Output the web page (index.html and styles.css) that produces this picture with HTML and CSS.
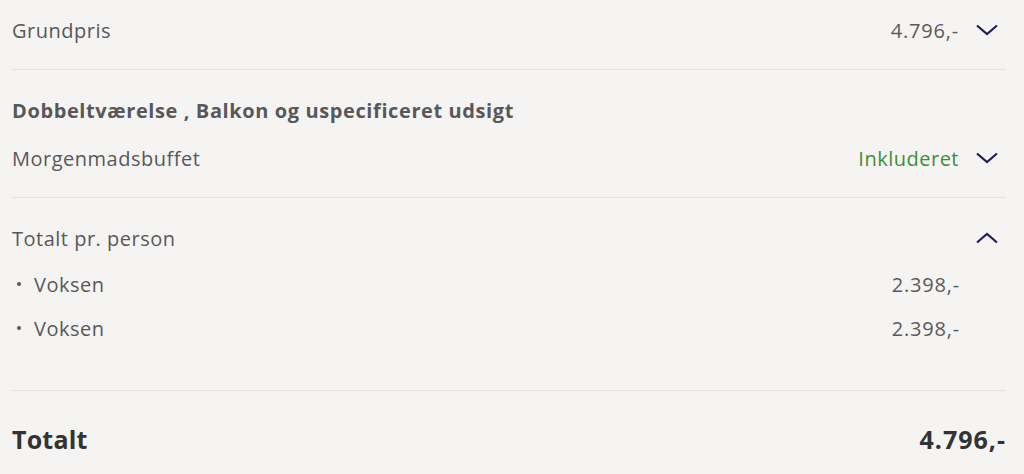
FILE: index.html
```html
<!DOCTYPE html>
<html lang="da">
<head>
<meta charset="utf-8">
<link rel="stylesheet" href="styles.css">
</head>
<body>
<div class="summary">
  <section class="section first">
    <div class="row">
      <span class="label">Grundpris</span>
      <span class="right"><span class="price">4.796,-</span><span class="chev"><svg viewBox="0 0 24 12" width="24" height="12"><path d="M2 1.5 L12 10 L22 1.5" fill="none" stroke="#211d5e" stroke-width="2.2"/></svg></span></span>
    </div>
  </section>
  <section class="section">
    <div class="row heading">Dobbeltværelse , Balkon og uspecificeret udsigt</div>
    <div class="row">
      <span class="label">Morgenmadsbuffet</span>
      <span class="right"><span class="price green">Inkluderet</span><span class="chev"><svg viewBox="0 0 24 12" width="24" height="12"><path d="M2 1.5 L12 10 L22 1.5" fill="none" stroke="#211d5e" stroke-width="2.2"/></svg></span></span>
    </div>
  </section>
  <section class="section persons">
    <div class="row">
      <span class="label">Totalt pr. person</span>
      <span class="right"><span class="chev"><svg viewBox="0 0 24 12" width="24" height="12"><path d="M2 10.5 L12 2 L22 10.5" fill="none" stroke="#211d5e" stroke-width="2.2"/></svg></span></span>
    </div>
    <ul class="items">
      <li class="item"><span class="label"><span class="dot"></span>Voksen</span><span class="price item-price">2.398,-</span></li>
      <li class="item"><span class="label"><span class="dot"></span>Voksen</span><span class="price item-price">2.398,-</span></li>
    </ul>
  </section>
  <div class="total">
    <span class="total-label">Totalt</span>
    <span class="total-price">4.796,-</span>
  </div>
</div>
</body>
</html>
```

FILE: styles.css
```css
html, body {
  margin: 0;
  padding: 0;
  background: #f5f4f2;
}
body {
  font-family: "Open Sans", "Liberation Sans", sans-serif;
  color: #58585a;
  font-size: 20px;
  letter-spacing: 0.5px;
}
.summary {
  margin: 0 18px 0 11px;
}
.section {
  padding: 16px 0 15px;
  border-bottom: 1px solid #e4e3e1;
}
.section.first {
  padding-top: 6px;
}
.section.persons {
  padding-bottom: 40px;
}
.row {
  height: 48px;
  display: flex;
  align-items: center;
  justify-content: space-between;
  padding-left: 1px;
}
.heading {
  font-weight: 700;
  font-size: 20px;
  letter-spacing: 0.6px;
}
.right {
  display: flex;
  align-items: center;
}
.price {
  color: #5a5a5c;
  letter-spacing: 0.8px;
}
.green {
  color: #3f8d3a;
  letter-spacing: 0.5px;
}
.chev {
  width: 24px;
  height: 12px;
  display: flex;
  margin-left: 16px;
  margin-right: 7px;
}
.items {
  list-style: none;
  margin: 0;
  padding: 0;
}
.item {
  height: 44px;
  display: flex;
  align-items: center;
  justify-content: space-between;
  padding-left: 6px;
  padding-right: 46px;
}
.item .label {
  display: flex;
  align-items: center;
}
.dot {
  width: 4px;
  height: 4px;
  border-radius: 50%;
  background: #58585a;
  margin-right: 13px;
}
.total {
  height: 48px;
  margin-top: 24px;
  display: flex;
  align-items: center;
  justify-content: space-between;
  font-weight: 700;
  font-size: 25px;
  color: #333335;
  padding-left: 1px;
}
.total-label {
  letter-spacing: 0.2px;
}
.total-price {
  letter-spacing: 1px;
}
```
